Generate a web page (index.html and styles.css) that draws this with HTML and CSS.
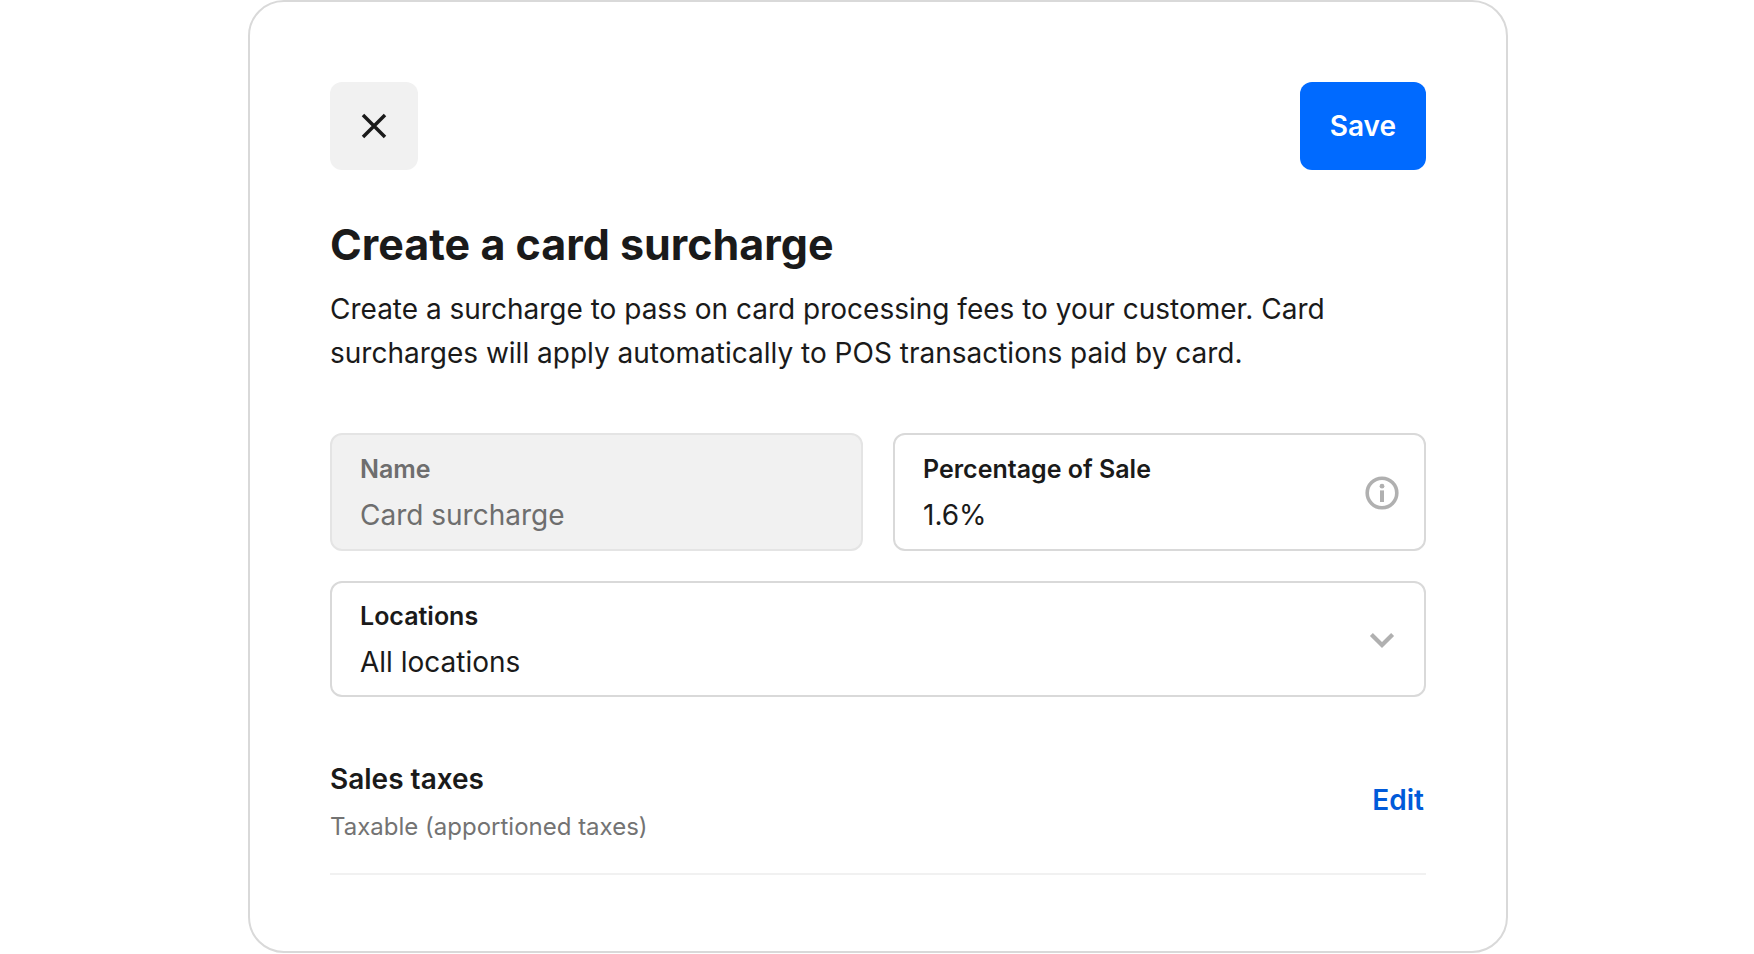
FILE: index.html
```html
<!DOCTYPE html>
<html lang="en">
<head>
    <meta charset="UTF-8">
    <meta name="viewport" content="width=device-width, initial-scale=1.0">
    <title>Create a card surcharge</title>
    <link rel="stylesheet" href="styles.css">
</head>
<body>

<main class="card">
    <form>
        <header class="toolbar">
            <button type="button" class="close-button" aria-label="Close">
                <svg width="26" height="26" viewBox="0 0 26 26" fill="none" stroke="#1a1a1a" stroke-width="3.5">
                    <path d="M2 2L24 24M24 2L2 24"/>
                </svg>
            </button>
            <button type="submit" class="save-button">Save</button>
        </header>

        <h1>Create a card surcharge</h1>
        <p class="intro">Create a surcharge to pass on card processing fees to your customer. Card surcharges will apply automatically to POS transactions paid by card.</p>

        <div class="fields">
            <div class="field disabled">
                <div class="field-text">
                    <label for="name">Name</label>
                    <input type="text" id="name" value="Card surcharge" disabled>
                </div>
            </div>
            <div class="field">
                <div class="field-text">
                    <label for="percentage">Percentage of Sale</label>
                    <input type="text" id="percentage" value="1.6%">
                </div>
                <svg class="field-icon" width="34" height="34" viewBox="0 0 34 34" fill="none">
                    <circle cx="17" cy="17" r="14.8" stroke="#b0b0b0" stroke-width="3.6"/>
                    <circle cx="17" cy="10.2" r="2.4" fill="#b0b0b0"/>
                    <path d="M17 14.4V26" stroke="#b0b0b0" stroke-width="4"/>
                </svg>
            </div>
            <div class="field wide">
                <div class="field-text">
                    <label for="locations">Locations</label>
                    <select id="locations">
                        <option>All locations</option>
                    </select>
                </div>
                <svg class="field-icon" width="34" height="34" viewBox="0 0 34 34" fill="none">
                    <path d="M6.4 11.4L17 22L27.6 11.4" stroke="#b0b0b0" stroke-width="4.2"/>
                </svg>
            </div>
        </div>

        <section class="taxes">
            <div>
                <h2>Sales taxes</h2>
                <p>Taxable (apportioned taxes)</p>
            </div>
            <a href="#">Edit</a>
        </section>
    </form>
</main>

</body>
</html>
```

FILE: styles.css
```css
* {
    box-sizing: border-box;
}
body {
    font-family: Inter, "Liberation Sans", sans-serif;
    margin: 0;
    padding-left: 2px;
    color: #1a1a1a;
    background-color: #fff;
}
h1, h2, p {
    margin: 0;
}
.card {
    max-width: 1260px;
    margin: 0 auto;
    padding: 80px 80px 76px;
    border: 2px solid #d9d9d9;
    border-radius: 36px;
}
.toolbar {
    display: flex;
    justify-content: space-between;
}
.close-button, .save-button {
    display: flex;
    align-items: center;
    justify-content: center;
    height: 88px;
    border: 0;
    border-radius: 12px;
    cursor: pointer;
}
.close-button {
    width: 88px;
    background: #f1f1f1;
}
.save-button {
    padding: 0 30px;
    background: #006aff;
    color: #fff;
    font: inherit;
    font-size: 28px;
    font-weight: 600;
}
h1 {
    margin-top: 48px;
    font-size: 43px;
    font-weight: 700;
    line-height: 52px;
}
.intro {
    margin-top: 17px;
    font-size: 28px;
    line-height: 44px;
}
.fields {
    display: grid;
    grid-template-columns: 1fr 1fr;
    gap: 30px;
    margin-top: 58px;
}
.field {
    display: flex;
    align-items: center;
    padding: 18px 25px 16px 28px;
    border: 2px solid #d9d9d9;
    border-radius: 12px;
}
.field.disabled {
    background: #f1f1f1;
    border-color: #e4e4e4;
    color: #6e6e6e;
}
.field.wide {
    grid-column: 1 / -1;
    padding-top: 17px;
    padding-bottom: 15px;
}
.field-text {
    flex: 1;
    min-width: 0;
}
.field-icon {
    flex: none;
}
label {
    display: block;
    font-size: 25px;
    font-weight: 600;
    line-height: 32px;
}
input, select {
    display: block;
    width: 100%;
    height: 36px;
    margin: 12px 0 0;
    padding: 0;
    border: 0;
    background: transparent;
    color: inherit;
    font: inherit;
    font-size: 28px;
    appearance: none;
}
.taxes {
    display: flex;
    align-items: center;
    justify-content: space-between;
    margin-top: 60px;
    padding-bottom: 30px;
    border-bottom: 2px solid #f1f1f1;
}
h2 {
    font-size: 28px;
    font-weight: 600;
    line-height: 44px;
}
.taxes p {
    margin-top: 10px;
    color: #737373;
    font-size: 24px;
    line-height: 32px;
}
.taxes a {
    padding-right: 2px;
    color: #005ad9;
    font-size: 28px;
    font-weight: 600;
    text-decoration: none;
}
```
